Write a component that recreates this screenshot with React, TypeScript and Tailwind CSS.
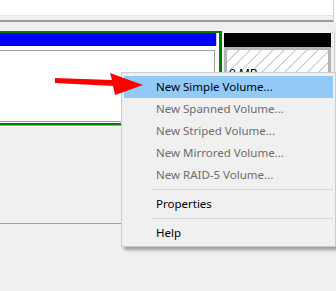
import React from "react";

const items: { label: string; disabled?: boolean; active?: boolean; sep?: boolean }[] = [
  { label: "New Simple Volume...", active: true },
  { label: "New Spanned Volume...", disabled: true },
  { label: "New Striped Volume...", disabled: true },
  { label: "New Mirrored Volume...", disabled: true },
  { label: "New RAID-5 Volume...", disabled: true },
  { label: "sep", sep: true },
  { label: "Properties" },
  { label: "sep", sep: true },
  { label: "Help" },
];

export default function App() {
  return (
    <div
      className="relative w-[336px] h-[291px] overflow-hidden bg-[#f0f0f0]"
      style={{ fontFamily: '"Noto Sans", "Open Sans", sans-serif' }}
    >
      {/* top pane */}
      <div className="flex w-[336px]">
        <div className="w-[333px] flex flex-col">
          <div className="h-[15px] bg-white" />
          <div className="h-[1px] bg-[#e3e3e3]" />
          <div className="h-[4px] bg-[#f0f0f0]" />
          <div className="h-[2px] bg-[#9a9a9a]" />
        </div>
        <div className="w-[1px] h-[22px] bg-[#d0d0d0]" />
        <div className="flex-1 h-[22px] bg-white" />
      </div>

      {/* disk row */}
      <div className="mt-[9px] flex flex-col">
        <div className="flex">
          {/* left partition */}
          <div className="w-[222px] h-[94px] border-t-2 border-r-[3px] border-b-2 border-[#008000] bg-white flex flex-col">
            <div className="flex">
              <div className="w-[216px] h-[13px] bg-[#0000ff]" />
              <div className="w-[1px] h-[13px] bg-[#c8c8c8]" />
            </div>
            <div className="mt-[4px] mr-[4px] mb-[1px] flex-1 border-t border-r border-b border-[#a0a0a0] bg-white" />
          </div>
          {/* right partition */}
          <div className="ml-[2px] mt-[2px] w-[107px] h-[92px] flex flex-col">
            <div className="h-[14px] bg-black" />
            <div className="flex-1 border-[3px] border-[#b4b4b4] bg-white relative overflow-hidden">
              <svg className="absolute inset-0" width="100%" height="100%">
                <defs>
                  <pattern id="hatch" width="8" height="8" patternUnits="userSpaceOnUse" patternTransform="rotate(45)">
                    <line x1="0" y1="0" x2="0" y2="8" stroke="#8a8a8a" strokeWidth="1" />
                  </pattern>
                </defs>
                <rect width="100%" height="100%" fill="url(#hatch)" />
              </svg>
              <div className="relative pl-[2px] pt-[18px] text-[12px] text-black leading-none">0 MB</div>
            </div>
          </div>
          <div className="ml-[3px] w-[1px] h-[94px] bg-[#d0d0d0]" />
        </div>
        <div className="h-[1px] w-[336px] bg-[#a0a0a0]" />
        <div className="h-[1px] w-[336px] bg-white" />
        <div className="h-[96px]" />
        <div className="h-[1px] w-[336px] bg-[#a0a0a0]" />
      </div>

      {/* context menu */}
      <div className="absolute left-[121px] top-[72px] w-[215px] h-[175px] border border-[#cccccc] bg-[#f0f0f0] pt-[3px] px-[2px] shadow-[3px_3px_3px_rgba(0,0,0,0.35)]">
        {items.map((it, i) =>
          it.sep ? (
            <div key={i} className="h-[7px] flex items-center">
              <div className="ml-[28px] flex-1 h-[1px] bg-[#d7d7d7]" />
            </div>
          ) : (
            <div
              key={i}
              className={
                "h-[22px] flex items-center pl-[32px] text-[11.5px] " +
                (it.active ? "bg-[#91c9f7] text-black" : it.disabled ? "text-[#6d6d6d]" : "text-black")
              }
            >
              {it.label}
            </div>
          )
        )}
      </div>

      {/* red arrow, drawn over the menu */}
      <svg className="absolute left-[50px] top-[68px]" width="100" height="34" viewBox="0 0 100 34">
        <polygon points="5,10 62,12 60,5 93,17 65,27 63,18 5,15" fill="#ff0000" />
      </svg>
    </div>
  );
}
